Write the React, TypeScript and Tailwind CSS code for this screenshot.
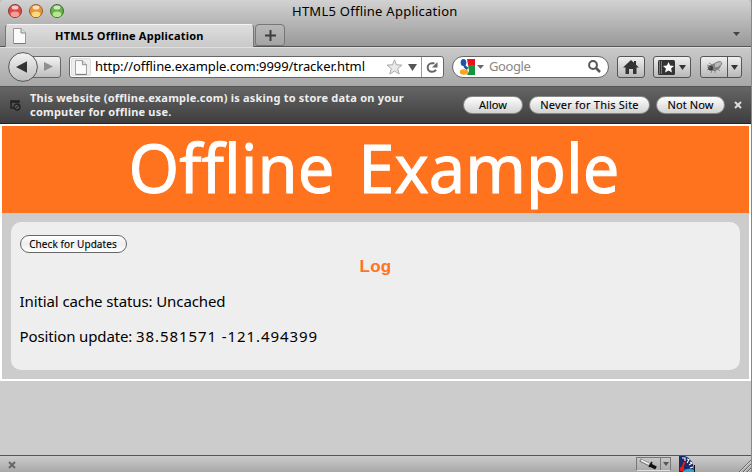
import type { ReactNode } from 'react';

const face = "font-['Noto_Sans','Open_Sans',sans-serif]";
const toolButton =
  'h-[22px] flex items-center justify-center rounded-[3px] border border-[#555] bg-linear-to-b from-[#f0f0f0] to-[#b8b8b8] shrink-0';

function Light({ rim, color, glow }: { rim: string; color: string; glow: string }) {
  return (
    <svg width="14" height="14" viewBox="0 0 14 14">
      <circle cx="7" cy="7" r="6.5" fill={color} stroke={rim} />
      <ellipse cx="7" cy="10.2" rx="4.3" ry="2.8" fill={glow} opacity=".85" />
      <ellipse cx="7" cy="3.4" rx="3.4" ry="2" fill="#fff" opacity=".7" />
    </svg>
  );
}

function Page({ width = 13, height = 16 }: { width?: number; height?: number }) {
  return (
    <svg width={width} height={height} viewBox="0 0 13 16" className="shrink-0">
      <path d="M.5.5H8L12.5 5v10.5H.5Z" fill="#fafafa" stroke="#999" />
      <path d="M8 .5V5h4.5" fill="#ddd" stroke="#888" />
      <path d="M1 15.5h11.5" stroke="#777" />
    </svg>
  );
}

function Down({ width = 7, height = 4, color = '#333' }: { width?: number; height?: number; color?: string }) {
  return (
    <svg width={width} height={height} viewBox="0 0 8 5" preserveAspectRatio="none" className="shrink-0">
      <path d="M0 0h8L4 5Z" fill={color} />
    </svg>
  );
}

function Pill({ children, className }: { children: ReactNode; className: string }) {
  return (
    <button
      className={`h-[18px] shrink-0 rounded-full border border-[#888] bg-linear-to-b from-white via-[#e8e8e8] to-[#d2d2d2] pb-px text-[11px] leading-[14px] whitespace-nowrap text-black [-webkit-text-stroke:0.1px] ${className}`}
    >
      {children}
    </button>
  );
}

function Header() {
  return (
    <div className="h-[47px] rounded-t-[4px] border-b border-[#555] bg-linear-to-b from-[#d2d2d2] to-[#999]">
      <div className="flex h-6 items-start">
        <div className="flex w-[292px] gap-[7px] pt-1 pl-2">
          <Light rim="#8f3735" color="#dc4b49" glow="#ffaaa4" />
          <Light rim="#99602a" color="#e99535" glow="#ffe58a" />
          <Light rim="#3c7030" color="#68ae4b" glow="#c4f295" />
        </div>
        <h1 className="text-[13px] leading-[22px] tracking-[0.25px] whitespace-nowrap text-black">HTML5 Offline Application</h1>
      </div>
      <div className="flex h-[23px] items-start">
        <div className="ml-[5px] flex h-[23px] w-[249px] items-center rounded-t-[4px] border-x border-t border-[#777] border-t-[#f3f3f3] bg-linear-to-b from-[#dedede] to-[#c9c9c9] pl-[7px]">
          <Page width={13} height={16} />
          <span className="ml-[29px] text-[11px] font-bold tracking-[0.22px] whitespace-nowrap text-black">HTML5 Offline Application</span>
        </div>
        <div className="ml-px flex h-[22px] w-[30px] items-center justify-center rounded-t-[4px] rounded-b-[3px] border border-[#777] bg-linear-to-b from-[#b8b8b8] to-[#a4a4a4]">
          <svg width="11" height="11" viewBox="0 0 11 11"><path d="M5.5 0v11M0 5.5h11" stroke="#3c3c3c" strokeWidth="2" /></svg>
        </div>
        <div className="ml-auto pt-2 pr-[11px]"><Down color="#444" /></div>
      </div>
    </div>
  );
}

function Toolbar() {
  return (
    <div className="flex h-[39px] items-center border-t border-[#e0e0e0] bg-linear-to-b from-[#cacaca] to-[#a7a7a7] pl-2">
      <svg width="53" height="30" viewBox="0 0 53 30" className="shrink-0">
        <defs>
          <linearGradient id="nav" x2="0" y2="1"><stop stopColor="#f4f4f4" /><stop offset="1" stopColor="#bcbcbc" /></linearGradient>
        </defs>
        <rect x="14.5" y="4.5" width="38" height="21" rx="2.5" fill="url(#nav)" stroke="#666" />
        <circle cx="15" cy="15" r="14.4" fill="url(#nav)" stroke="#555" />
        <path d="M8 15 19 9.2v11.6Z" fill="#333" />
        <path d="M45 14.5 36 10v9Z" fill="#909090" />
      </svg>
      <div className="ml-2 flex h-[22px] w-[375px] shrink-0 items-center rounded-[3px] border border-[#666] bg-white">
        <div className="ml-px flex h-[18px] w-5 items-center justify-center rounded-[2px] border border-[#ddd] bg-[#eee]"><Page width={12} height={15} /></div>
        <span className="ml-1 w-[292px] shrink-0 pb-px text-[13px] tracking-[-0.08px] whitespace-nowrap text-black">http://offline.example.com:9999/tracker.html</span>
        <svg width="17" height="16" viewBox="0 0 17 16" className="-ml-[1px] shrink-0">
          <path d="m8.5.8 2 5 5.500.300-4.300 3.500 1.500 5.400-4.700-3-4.700 3 1.500-5.400L1 6.100l5.500-.300Z" fill="#e9e9e9" stroke="#aaa" />
        </svg>
        <span className="ml-[5px] flex"><Down width={9} height={7} color="#555" /></span>
        <div className="ml-auto flex h-5 w-[22px] items-center justify-center border-l border-[#999]">
          <svg width="13" height="13" viewBox="0 0 13 13">
            <path d="M8.500 2.200H6A4.200 4.200 0 0 0 6 10.800c1.800 0 3-.6 4-1.900" fill="none" stroke="#666" strokeWidth="2" />
            <path d="M11.500 1v5.500H6Z" fill="#666" />
          </svg>
        </div>
      </div>
      <div className="ml-2 flex h-[22px] w-[157px] shrink-0 items-center rounded-full border border-[#666] bg-white pl-[6px]">
        <svg width="16" height="16" viewBox="0 0 16 16" className="shrink-0">
          <path d="M8 0h8v6H9Z" fill="#e8131c" />
          <path d="M9 6h7v10H8l2-4Z" fill="#16943c" />
          <ellipse cx="4.500" cy="3.500" rx="2.800" ry="3.500" fill="#1954a6" />
          <path d="m5.500 5.500 4 3.500-2 2-3-3Z" fill="#1954a6" />
          <ellipse cx="5" cy="13" rx="4.200" ry="2.700" fill="#f8a51b" />
        </svg>
        <span className="ml-[2px]"><Down color="#666" /></span>
        <span className="ml-[5px] text-[13px] tracking-[-0.4px] text-[#888]">Google</span>
        <svg width="13" height="13" viewBox="0 0 13 13" className="mr-[7px] mb-[2px] ml-auto">
          <circle cx="5" cy="5" r="3.900" fill="none" stroke="#555" strokeWidth="2" /><path d="m8 8 4 4" stroke="#555" strokeWidth="2.500" />
        </svg>
      </div>
      <button className={`${toolButton} ml-2 w-7`}>
        <svg width="16" height="14" viewBox="0 0 16 14"><path d="M8 0 0 7.500h2.500V14H6V9h4v5h3.500V7.500H16L13 4.700V1h-2v1.800Z" fill="#333" /></svg>
      </button>
      <button className={`${toolButton} ml-2 w-[38px] gap-1`}>
        <svg width="17" height="15" viewBox="0 0 17 15">
          <rect width="17" height="15" rx="1.500" fill="#333" /><path d="M1.500 1v13M3.500 1v13" stroke="#777" />
          <path d="m10.500 2 1.600 3.600 3.900.4-2.900 2.600.8 3.900-3.400-2-3.400 2 .8-3.900L5 6l3.900-.4Z" fill="#fff" />
        </svg>
        <Down width={7} height={5} />
      </button>
      <div className={`${toolButton} ml-[9px] w-[42px]`}>
        <svg width="26" height="18" viewBox="0 0 26 18">
          <ellipse cx="14" cy="9" rx="6" ry="3.600" transform="rotate(-20 14 9)" fill="#808080" />
          <ellipse cx="17" cy="6.200" rx="4" ry="2.300" transform="rotate(-20 17 6.200)" fill="#bbb" stroke="#777" strokeWidth=".8" />
          <circle cx="9.500" cy="10" r="2.500" fill="#3c3c3c" />
          <path d="m11 7-3-2M9 8 6 7M8 11l-2 1m5 0-1 3m4-3v3m3-4 2 2m-9-3-4-1" stroke="#777" strokeWidth=".8" />
          <path d="m14 9 4-1" stroke="#ccc" strokeWidth=".8" />
        </svg>
        <div className="flex h-full flex-1 items-center justify-center border-l border-[#555]"><Down width={7} height={5} /></div>
      </div>
    </div>
  );
}

function Notice() {
  return (
    <div className="flex h-[38px] items-center border-t border-b border-t-[#555] border-b-[#222] bg-linear-to-b from-[#656565] to-[#3e3e3e]">
      <svg width="11" height="11" viewBox="0 0 11 11" className="ml-[10px] shrink-0">
        <path d="M4 8H1V1h8v2M1 2h8" fill="none" stroke="#222" strokeWidth="1.500" />
        <circle cx="7" cy="7" r="3" fill="#555" stroke="#222" strokeWidth="1.300" /><path d="m5 9 4-4" stroke="#222" />
      </svg>
      <p className="ml-[9px] w-[433px] shrink-0 text-[11px] leading-[14px] font-bold tracking-[0.21px] text-[#eee]">
        This website (offline.example.com) is asking to store data on your<br />computer for offline use.
      </p>
      <Pill className="w-[60px]">Allow</Pill>
      <Pill className="ml-[6px] w-[121px] tracking-[0.22px]">Never for This Site</Pill>
      <Pill className="ml-[6px] w-[69px] tracking-[0.1px]">Not Now</Pill>
      <svg width="8" height="8" viewBox="0 0 8 8" className="ml-[9px]"><path d="m1 1 6 6m0-6L1 7" stroke="#ddd" strokeWidth="2" /></svg>
    </div>
  );
}

function Content() {
  return (
    <main className="h-[331px] bg-[#ccc]">
      <div className="h-[257px] border-2 border-white">
        <div className="flex h-[87px] items-center justify-center bg-[#ff721e] pr-[3px]">
          <h2 className="scale-y-[1.05] pb-[5px] text-[65px] leading-[82px] whitespace-nowrap text-white [-webkit-text-stroke:0.9px_white] [word-spacing:7px]">Offline Example</h2>
        </div>
        <section className="mx-[9px] mt-[9px] h-[148px] rounded-[10px] bg-[#eee] px-[8.5px] pt-[13px] text-black">
          <button className="block h-[18px] w-[107px] rounded-full border border-[#666] bg-linear-to-b from-white via-[#eee] to-white pb-px text-[10px] leading-[14px] tracking-[0.08px] whitespace-nowrap [-webkit-text-stroke:0.1px]">Check for Updates</button>
          <h3 className="h-[26px] text-center font-['Liberation_Sans',sans-serif] text-[17px] leading-[27px] font-bold tracking-[0.2px] text-[#ff721e]">Log</h3>
          <p className="mt-[11px] text-[15px] leading-[22px] tracking-[-0.1px]">Initial cache status: Uncached</p>
          <p className="mt-[13px] text-[15px] leading-[22px] tracking-[-0.13px]">Position update: <span className="tracking-[0.92px]">38.581571 -121.494399</span></p>
        </section>
      </div>
    </main>
  );
}

function StatusBar() {
  return (
    <footer className="flex h-[17px] items-start border-t border-[#555] bg-linear-to-b from-[#ccc] to-[#a8a8a8]">
      <svg width="8" height="8" viewBox="0 0 8 8" className="mt-[5px] ml-2"><path d="m1 1 6 6m0-6L1 7" stroke="#666" strokeWidth="2" /></svg>
      <div className="mt-px ml-[620px] flex h-[14px] w-[35px] items-center border border-[#777] border-b-[#ddd]">
        <svg width="23" height="12" viewBox="0 0 23 12" className="shrink-0">
          <path d="m3 2 9 4.500" stroke="#777" strokeWidth="3.200" />
          <path d="m4 2.300 8 4" stroke="#f4f4f4" strokeWidth="1.600" />
          <path d="m13 7 6 3" stroke="#111" strokeWidth="3.600" />
          <path d="m12 9 3-5" stroke="#111" strokeWidth="1.500" />
        </svg>
        <div className="flex h-full flex-1 items-center justify-center border-l border-[#777]"><Down width={6} height={4} color="#555" /></div>
      </div>
      <svg width="16" height="16" viewBox="0 0 16 16" className="ml-2">
        <path d="M0 0h6q9 3 9 16H0Z" fill="#182d68" />
        <path d="M4 15q5-4 11-1v2H4Z" fill="#30a0df" />
        <path d="M3 2h3v3M8 3l2 .500L8 7m3-1 2 1-3 2m1 3 3-1" fill="none" stroke="#fff" strokeWidth="1.100" />
        <circle cx="3" cy="13" r="2.300" fill="#f01818" />
        <path d="m3 13 2.500-7" stroke="#f01818" strokeWidth="2" />
        <path d="M15.500 9v7" stroke="#111" />
      </svg>
      <svg width="12" height="12" viewBox="0 0 12 12" className="mt-1 ml-auto"><path d="M0 12 12 0M4 12l8-8M8 12l4-4" stroke="#666" /><path d="M1 12 12 1M5 12l7-7M9 12l3-3" stroke="#eee" strokeWidth=".5" /></svg>
    </footer>
  );
}

export default function App() {
  return (
    <div className={`h-[472px] w-[752px] overflow-hidden border-r border-[#888] bg-[#bbb] ${face}`}>
      <Header />
      <Toolbar />
      <Notice />
      <Content />
      <StatusBar />
    </div>
  );
}
